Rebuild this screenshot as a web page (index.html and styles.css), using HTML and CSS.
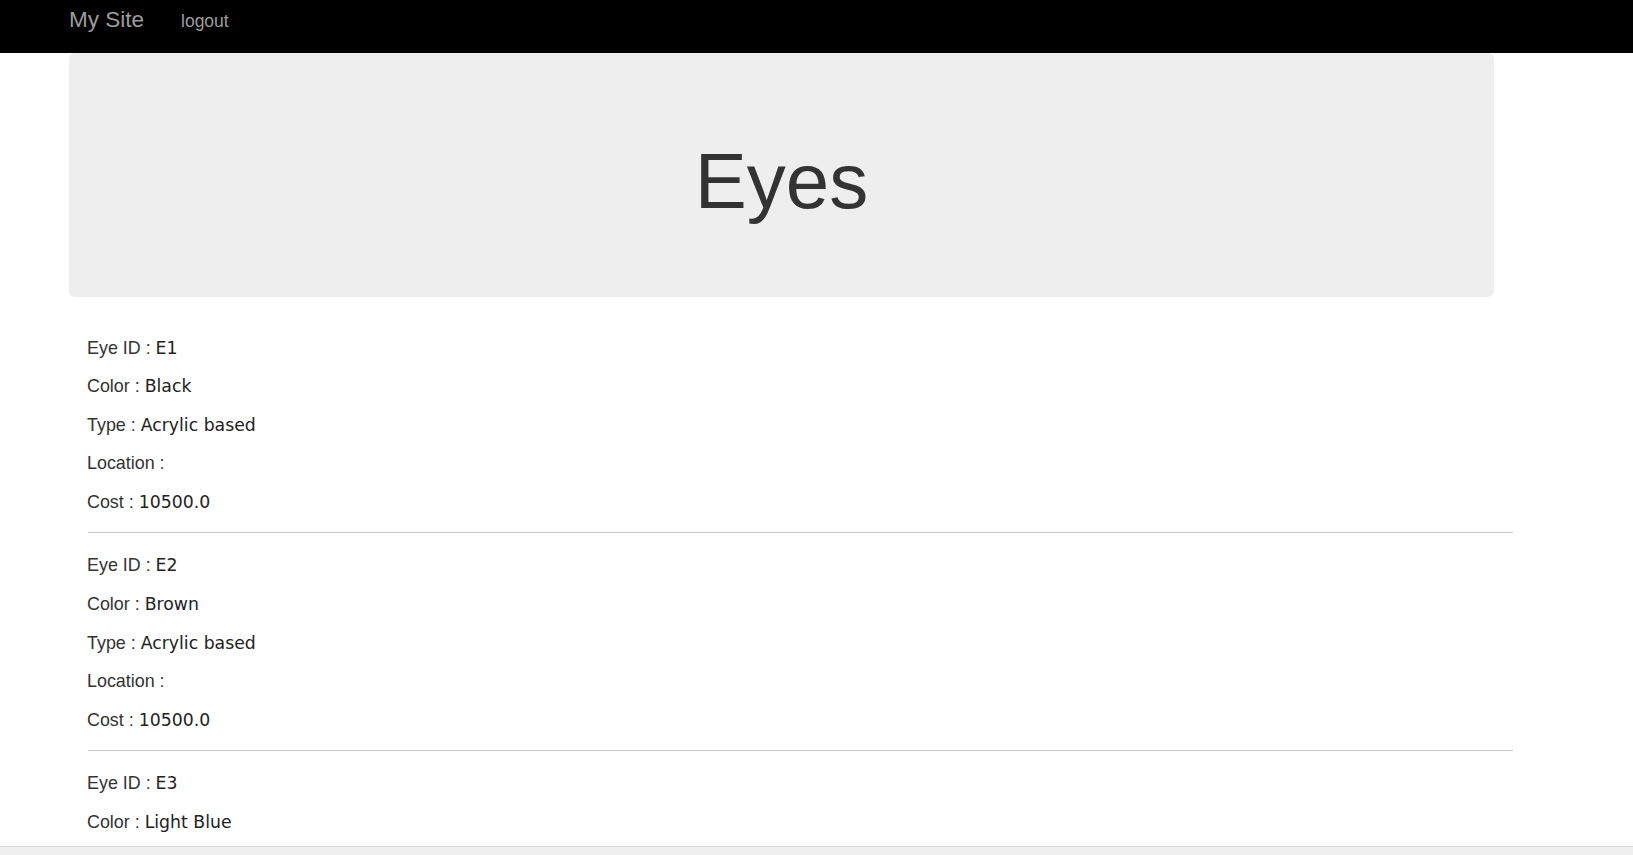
FILE: index.html
```html
<!DOCTYPE html>
<html lang="en">
<head>
<meta charset="utf-8">
<title>Eyes</title>
<link rel="stylesheet" href="styles.css">
</head>
<body>
<nav class="navbar">
  <a class="brand" href="#">My Site</a>
  <a class="nav-link" href="#">logout</a>
</nav>
<header class="jumbotron">
  <h1 class="title">Eyes</h1>
</header>
<main class="content">
  <section class="item">
    <div class="field"><span class="label">Eye ID : </span><span class="value">E1</span></div>
    <div class="field"><span class="label">Color : </span><span class="value">Black</span></div>
    <div class="field"><span class="label">Type : </span><span class="value">Acrylic based</span></div>
    <div class="field"><span class="label">Location : </span><span class="value"></span></div>
    <div class="field"><span class="label">Cost : </span><span class="value">10500.0</span></div>
  </section>
  <hr class="divider">
  <section class="item">
    <div class="field"><span class="label">Eye ID : </span><span class="value">E2</span></div>
    <div class="field"><span class="label">Color : </span><span class="value">Brown</span></div>
    <div class="field"><span class="label">Type : </span><span class="value">Acrylic based</span></div>
    <div class="field"><span class="label">Location : </span><span class="value"></span></div>
    <div class="field"><span class="label">Cost : </span><span class="value">10500.0</span></div>
  </section>
  <hr class="divider">
  <section class="item">
    <div class="field"><span class="label">Eye ID : </span><span class="value">E3</span></div>
    <div class="field"><span class="label">Color : </span><span class="value">Light Blue</span></div>
  </section>
</main>
<div class="bottom-bar"></div>
</body>
</html>
```

FILE: styles.css
```css
html, body {
  margin: 0;
  padding: 0;
  background: #fff;
}

body {
  font-family: "Liberation Sans", Arial, sans-serif;
  font-size: 17.9px;
  color: #333;
}

.navbar {
  display: flex;
  align-items: baseline;
  height: 53px;
  box-sizing: border-box;
  padding: 9px 0 0 69px;
  background: #000;
}

.brand {
  font-size: 22.5px;
  line-height: 1;
  color: #9d9d9d;
  text-decoration: none;
}

.nav-link {
  margin-left: 37px;
  font-size: 17.5px;
  line-height: 1;
  color: #9d9d9d;
  text-decoration: none;
}

.jumbotron {
  margin-left: 69px;
  width: 1425px;
  box-sizing: border-box;
  padding: 86px 0 72px;
  background: #eee;
  border-radius: 6px;
  text-align: center;
}

.title {
  margin: 0;
  font-size: 78px;
  font-weight: 400;
  line-height: 1.1;
  color: #333;
}

.content {
  margin: 32px 0 0 87px;
  width: 1426px;
}

.field {
  height: 38.54px;
  line-height: 38.54px;
  white-space: pre;
}

.label {
  color: #333;
}

.value {
  font-family: "DejaVu Sans", Verdana, sans-serif;
  font-size: 17.3px;
  color: #222;
}

.divider {
  margin: 11px 0 13px 1px;
  border: 0;
  border-top: 1px solid #c9c9c9;
  height: 0;
}

.bottom-bar {
  position: fixed;
  left: 0;
  right: 0;
  bottom: 0;
  height: 8px;
  border-top: 1px solid #d9d9d9;
  background: #f0f0f0;
}
```
